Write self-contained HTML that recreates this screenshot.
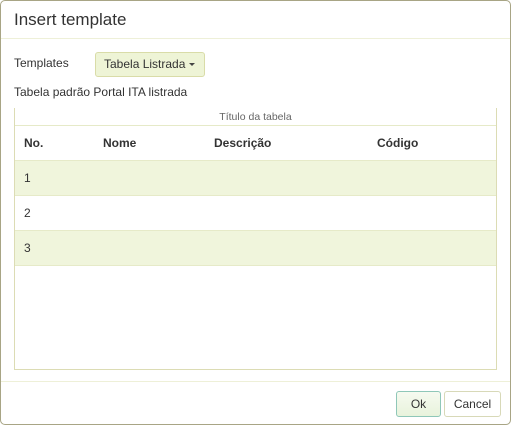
<!DOCTYPE html><html><head><style>
body{margin:0;width:511px;height:425px;background:#fff;font-family:"Liberation Sans",sans-serif;overflow:hidden}
.dlg{position:absolute;left:0;top:0;width:509px;height:423px;border:1px solid #a8a585;border-radius:5px;background:#fff}
.t{position:absolute;left:13px;top:9px;font-size:17px;color:#333}
.hl{position:absolute;left:0;right:0;top:37px;border-top:1px solid #eef0d8}
.fl{position:absolute;left:0;right:0;top:380px;border-top:1px solid #eef0d8}
.lab{position:absolute;left:13px;top:55px;font-size:12px;color:#333}
.dd{position:absolute;left:94px;top:51px;width:108px;height:23px;background:#eef4d6;border:1px solid #d9dca8;border-radius:3px;font-size:12px;color:#333;line-height:23px;text-indent:8px}
.dd:after{content:"";position:absolute;right:9px;top:10px;border:3px solid transparent;border-top:3px solid #444;border-bottom:0}
.desc{position:absolute;left:13px;top:84px;font-size:12px;color:#333}
.fr{position:absolute;left:13px;top:107px;width:481px;height:261px;border:1px solid #dcdcb4;border-top:0}
.cap{position:absolute;left:0;right:0;top:3px;text-align:center;font-size:10.5px;color:#666}
.r{position:absolute;left:0;right:0;height:34px;border-top:1px solid #e6eac8;font-size:12px;color:#333}
.r span{position:absolute;top:10px}
.b{font-weight:bold}
.g{background:#f0f5dc}
.btn{position:absolute;top:390px;height:24px;border:1px solid #d8d9b8;border-radius:3px;font-size:12px;color:#333;text-align:center;line-height:24px;background:#fff}
</style></head><body><div class="dlg">
<div class="t">Insert template</div><div class="hl"></div>
<div class="lab">Templates</div><div class="dd">Tabela Listrada</div>
<div class="desc">Tabela padrão Portal ITA listrada</div>
<div class="fr"><div class="cap">Título da tabela</div>
<div class="r b" style="top:17px;height:34px"><span style="left:9px">No.</span><span style="left:88px">Nome</span><span style="left:199px">Descrição</span><span style="left:362px">Código</span></div>
<div class="r g" style="top:52px"><span style="left:9px">1</span></div>
<div class="r" style="top:87px"><span style="left:9px">2</span></div>
<div class="r g" style="top:122px;border-bottom:1px solid #e6eac8"><span style="left:9px">3</span></div>
</div>
<div class="fl"></div>
<div class="btn" style="left:395px;width:43px;background:linear-gradient(#f6faf0,#e8f3dc);border-color:#8fc7b8">Ok</div>
<div class="btn" style="left:443px;width:55px">Cancel</div>
</div></body></html>
